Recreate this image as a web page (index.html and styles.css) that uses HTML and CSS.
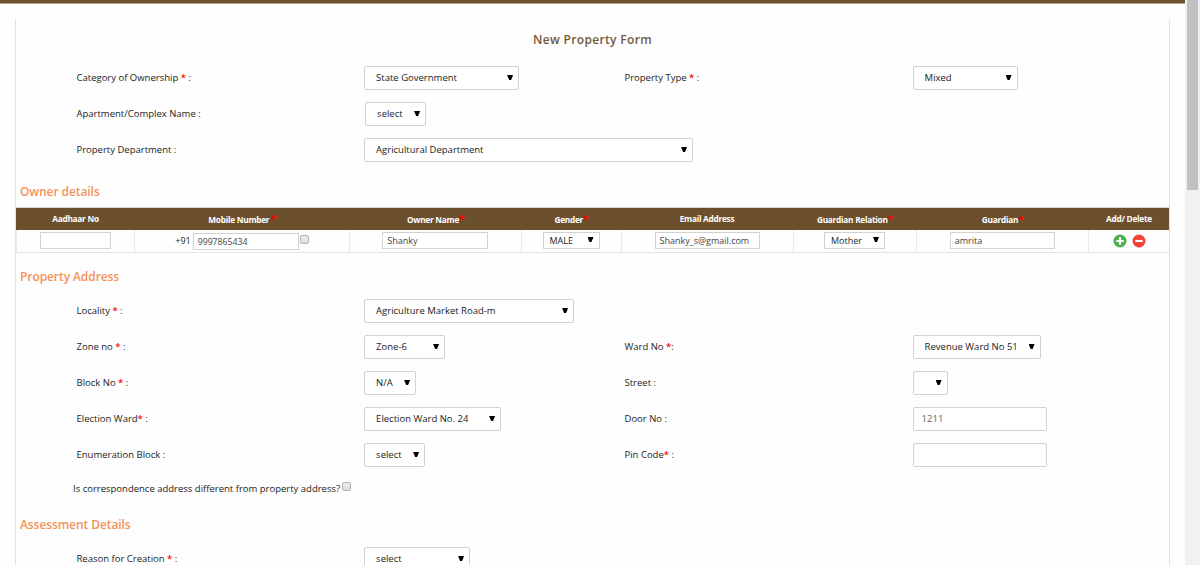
FILE: index.html
```html
<!DOCTYPE html>
<html lang="en">
<head>
<meta charset="utf-8">
<title>New Property Form</title>
<link rel="stylesheet" href="styles.css">
</head>
<body>
<div class="page">
<main class="content">
<div class="topbar"></div>
<form class="panel">
<h1 class="title">New Property Form</h1>
<div class="row"><label>Category of Ownership <b>*</b> :</label><div><span class="select w155">State Government</span></div><label>Property Type <b>*</b> :</label><div><span class="select w105">Mixed</span></div></div>
<div class="row"><label>Apartment/Complex Name :</label><div><span class="select w61 shifted">select</span></div></div>
<div class="row"><label>Property Department :</label><div><span class="select w329">Agricultural Department</span></div></div>
<h2 class="section">Owner details</h2>
<div class="owners">
<div class="owner-row head">
<div>Aadhaar No</div><div class="req">Mobile Number&nbsp;<b>*</b></div><div class="req">Owner Name<b>*</b></div><div class="req">Gender<b>*</b></div><div>Email Address</div><div class="req">Guardian Relation<b>*</b></div><div class="req">Guardian<b>*</b></div><div>Add/ Delete</div>
</div>
<div class="owner-row body">
<div><span class="cell-input w71"></span></div>
<div class="mobile"><span class="code">+91</span><span class="cell-input w106">9997865434</span><span class="check"></span></div>
<div><span class="cell-input w106">Shanky</span></div>
<div><span class="cell-select w57">MALE</span></div>
<div><span class="cell-input w105">Shanky_s@gmail.com</span></div>
<div><span class="cell-select w61">Mother</span></div>
<div><span class="cell-input w105">amrita</span></div>
<div class="actions">
<svg viewBox="0 0 14 14"><circle cx="7" cy="7" r="6.5" fill="#4caf50"/><path d="M7 3.3v7.4M3.3 7h7.4" stroke="#fff" stroke-width="2.1"/></svg>
<svg viewBox="0 0 14 14"><circle cx="7" cy="7" r="6.5" fill="#f44336"/><path d="M3.3 7h7.4" stroke="#fff" stroke-width="2.1"/></svg>
</div>
</div>
</div>
<h2 class="section tall">Property Address</h2>
<div class="row"><label>Locality <b>*</b> :</label><div><span class="select w210">Agriculture Market Road-m</span></div></div>
<div class="row"><label>Zone no <b>*</b> :</label><div><span class="select w81">Zone-6</span></div><label>Ward No <b>*</b>:</label><div><span class="select w128">Revenue Ward No 51</span></div></div>
<div class="row"><label>Block No <b>*</b> :</label><div><span class="select w52">N/A</span></div><label>Street :</label><div><span class="select w35"></span></div></div>
<div class="row"><label>Election Ward<b>*</b> :</label><div><span class="select w137">Election Ward No. 24</span></div><label>Door No :</label><div><span class="input">1211</span></div></div>
<div class="row"><label>Enumeration Block :</label><div><span class="select w61">select</span></div><label>Pin Code<b>*</b> :</label><div><span class="input"></span></div></div>
<div class="corr"><span>Is correspondence address different from property address?</span><span class="check"></span></div>
<h2 class="section tall">Assessment Details</h2>
<div class="row"><label>Reason for Creation <b>*</b> :</label><div><span class="select w106">select</span></div></div>
</form>
</main>
<aside class="scrollbar"><div class="thumb"></div></aside>
</div>
</body>
</html>
```
FILE: styles.css
```css
* { box-sizing: border-box; }
body { margin: 0; font-family: "Open Sans", sans-serif; font-size: 9.5px; color: #222; background: #fefefe; }
.page { display: flex; height: 565px; overflow: hidden; }
.content { width: 1185px; height: 565px; overflow: hidden; }
.topbar { height: 4px; background: #6c4f2c; border-bottom: 1px solid #b3a590; }
.panel { margin: 14px 15px 0; height: 620px; border: 1px solid #e0e0e0; border-top-color: #fafafa; border-radius: 3px; }
.title { margin: 0; height: 41px; line-height: 41px; text-align: center; font-size: 12px; font-weight: 600; letter-spacing: .34px; color: #735a3c; }
.section { margin: 0; height: 39px; padding: 14px 0 0 4px; line-height: 20px; font-size: 12px; font-weight: 600; letter-spacing: -.08px; color: #f5925a; }
.tall { height: 40px; }
.row { display: grid; grid-template-columns: 288px 260px 288.5px 1fr; height: 36px; align-items: center; padding-left: 60.5px; }
.row > label { padding-bottom: 1px; }
.row > div { display: flex; margin-left: -.4px; }
b { color: #f00; font-weight: 600; }
.select, .input { position: relative; display: block; flex-shrink: 0; height: 24px; line-height: 22.5px; padding-left: 11px; border: 1px solid #d2d2d2; border-radius: 2px; background: #fff; white-space: nowrap; }
.input { width: 134px; padding-left: 8px; color: #666; }
.shifted { margin-left: 1px; }
.select::after, .cell-select::after { content: ""; position: absolute; right: 5px; top: 8px; width: 6px; height: 5px; background: #000; clip-path: polygon(0 0, 100% 0, 66% 100%, 34% 100%); }
.w35 { width: 35px; } .w52 { width: 52px; } .w57 { width: 57px; } .w61 { width: 61px; } .w71 { width: 71px; } .w81 { width: 81px; }
.w105 { width: 105px; } .w106 { width: 106px; } .w128 { width: 128px; } .w137 { width: 137px; } .w155 { width: 155px; } .w210 { width: 210px; } .w329 { width: 329px; }
.owners { height: 46px; border-top: 1px solid #d9d4cc; border-bottom: 1px solid #e5e5e5; }
.owner-row { display: grid; grid-template-columns: 118px 215px 171.5px 100px 172px 123px 172.5px 1fr; height: 22px; }
.owner-row > div { display: flex; align-items: center; justify-content: center; border-left: 1px solid #e8e8e8; white-space: nowrap; }
.head { background: #6c4f2c; color: #fff; font-size: 8.3px; font-weight: 700; letter-spacing: -.27px; }
.owner-row.head > div { border-color: #6c4f2c; padding-bottom: 1px; }
.head b { font-size: 10.5px; font-weight: 700; }
.owner-row.head > .req { padding: 0 0 0 1px; }
.owner-row.body > div { padding-bottom: 1px; }
.cell-input, .cell-select { position: relative; display: block; height: 17px; line-height: 16px; padding-left: 4px; border: 1px solid #d2d2d2; color: #444; background: #fff; font-size: 9px; }
.cell-select { padding-left: 6px; color: #222; }
.cell-select::after { top: 4px; }
.mobile .code { font-size: 9px; }
.mobile .cell-input { margin: 2px 1px 0 2px; font-size: 8.7px; }
.check { width: 9px; height: 9px; border: 1px solid #b5b5b5; border-radius: 2px; background: linear-gradient(#ededed, #dcdcdc); }
.mobile .check { margin-bottom: 2px; }
.actions { gap: 5px; }
.actions svg { width: 14px; height: 14px; }
.corr { display: flex; align-items: center; gap: 1.5px; height: 28px; padding: 3px 0 0 57px; }
.corr .check { margin-bottom: 4px; }
.scrollbar { width: 15px; height: 565px; padding-left: 2px; background: #f1f1f1; }
.thumb { width: 11px; height: 190px; background: #c1c1c1; }
```
